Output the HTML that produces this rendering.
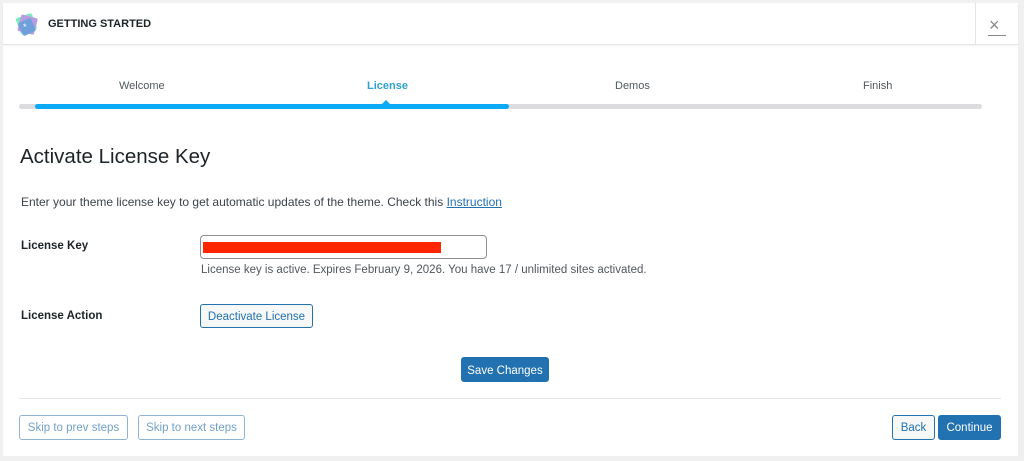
<!DOCTYPE html>
<html><head><meta charset="utf-8"><style>
*{margin:0;padding:0;box-sizing:border-box}
body{width:1024px;height:461px;background:#f0f0f1;font-family:"Liberation Sans",sans-serif;color:#1d2327;position:relative;overflow:hidden}
.p{position:absolute;left:3px;top:3px;width:1015px;height:453px;background:#fff}
.a{position:absolute;white-space:nowrap}
.hdr{position:absolute;left:3px;top:3px;width:1015px;height:42px;border-bottom:1px solid #e2e4e7;box-shadow:0 1px 2px rgba(0,0,0,.05)}
.btn{position:absolute;border:1px solid #2271b1;border-radius:3px;font-size:11.5px;display:flex;align-items:center;justify-content:center;color:#2271b1;background:#f6f7f7}
</style></head><body>
<div class="p"></div>
<div class="hdr"></div>
<svg class="a" style="left:14px;top:12px" width="26" height="26" viewBox="0 0 26 26">
<rect x="4" y="3" width="17" height="17" rx="2" fill="#7ee8c4" transform="rotate(-20 13 12)"/>
<rect x="5" y="4" width="17" height="17" rx="2" fill="#b79ce0" transform="rotate(15 13 13)"/>
<rect x="6" y="8" width="14" height="14" rx="2" fill="#6fa0dc" transform="rotate(-25 13 15)"/>
<text x="9" y="18" font-size="9" fill="#fff">*</text></svg>
<div class="a" style="left:48px;top:18px;font-size:11px;font-weight:bold;color:#1d2327">GETTING STARTED</div>
<div class="a" style="left:975px;top:3px;width:1px;height:42px;background:#e2e4e7"></div>
<div class="a" style="left:989px;top:15px;font-size:18px;color:#888">×</div>
<div class="a" style="left:988px;top:35px;width:18px;height:1px;background:#888"></div>
<div class="a" style="left:119px;top:80px;font-size:11px;color:#50575e">Welcome</div>
<div class="a" style="left:367px;top:80px;font-size:11px;color:#2ea2cc;font-weight:bold">License</div>
<div class="a" style="left:615px;top:80px;font-size:11px;color:#50575e">Demos</div>
<div class="a" style="left:863px;top:80px;font-size:11px;color:#50575e">Finish</div>
<div class="a" style="left:19px;top:104px;width:963px;height:5px;background:#dcdcde;border-radius:3px"></div>
<div class="a" style="left:35px;top:104px;width:474px;height:5px;background:#0aaaf7;border-radius:3px"></div>
<div class="a" style="left:382px;top:100px;width:0;height:0;border-left:4px solid transparent;border-right:4px solid transparent;border-bottom:4px solid #0aaaf7"></div>
<div class="a" style="left:20px;top:145px;font-size:20.5px;color:#1d2327">Activate License Key</div>
<div class="a" style="left:21px;top:195px;font-size:12px;color:#3c434a">Enter your theme license key to get automatic updates of the theme. Check this <span style="color:#2271b1;text-decoration:underline">Instruction</span></div>
<div class="a" style="left:21px;top:240px;font-size:11.5px;font-weight:bold">License Key</div>
<div class="a" style="left:200px;top:235px;width:287px;height:24px;border:1px solid #8c8f94;border-radius:4px;background:#fff"></div>
<div class="a" style="left:203px;top:242px;width:238px;height:11px;background:#ff2600"></div>
<div class="a" style="left:201px;top:264px;font-size:11.5px;color:#50575e">License key is active. Expires February 9, 2026. You have 17 / unlimited sites activated.</div>
<div class="a" style="left:21px;top:310px;font-size:11.5px;font-weight:bold">License Action</div>
<div class="btn" style="left:200px;top:304px;width:113px;height:24px;padding-top:2px">Deactivate License</div>
<div class="btn" style="left:461px;top:357px;width:88px;height:25px;background:#2271b1;color:#fff;padding-top:2px">Save Changes</div>
<div class="a" style="left:19px;top:398px;width:982px;height:1px;background:#e5e5e5"></div>
<div class="btn" style="left:19px;top:415px;width:109px;height:25px;border-color:#8fb3d6;color:#72a0cc;background:#fff">Skip to prev steps</div>
<div class="btn" style="left:138px;top:415px;width:107px;height:25px;border-color:#8fb3d6;color:#72a0cc;background:#fff">Skip to next steps</div>
<div class="btn" style="left:892px;top:415px;width:43px;height:25px">Back</div>
<div class="btn" style="left:938px;top:415px;width:63px;height:25px;background:#2271b1;color:#fff">Continue</div>
</body></html>
